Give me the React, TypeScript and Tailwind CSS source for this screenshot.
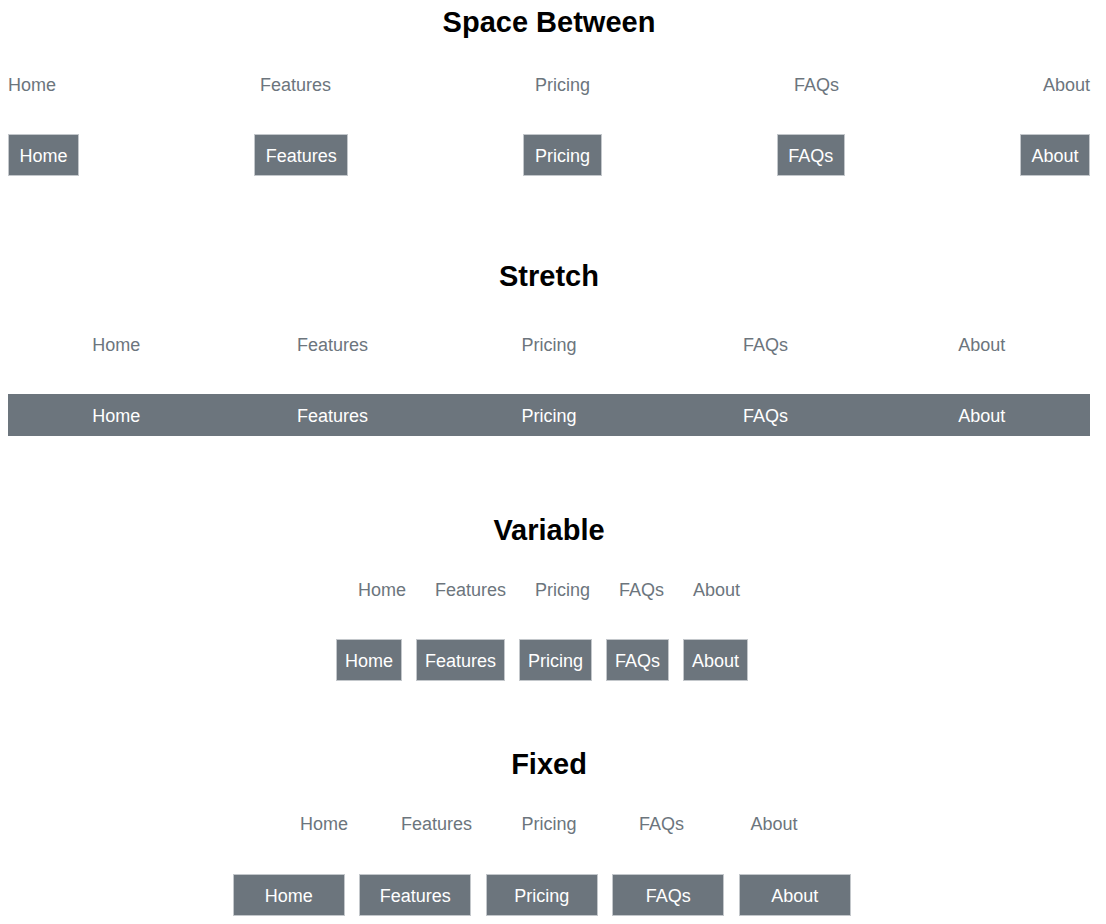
import React from "react";

const items = ["Home", "Features", "Pricing", "FAQs", "About"];

const btn =
  "bg-[#6c757d] text-white border border-[#c3c7cb] pt-[11px] pb-[9px] leading-[20px] text-[18px]";

export default function App() {
  return (
    <div className="pl-2 pr-4 font-['Liberation_Sans',Arial,sans-serif] bg-white min-h-[924px]">
      {/* Space Between */}
      <h2 className="mt-[5px] text-center text-[29px] leading-[34px] font-bold text-black">
        Space Between
      </h2>
      <div className="mt-[36px] flex justify-between text-[18px] leading-[21px] text-[#6c757d]">
        {items.map((t) => (
          <span key={t}>{t}</span>
        ))}
      </div>
      <div className="mt-[38px] flex justify-between">
        {items.map((t) => (
          <span key={t} className={`${btn} px-[10.5px]`}>
            {t}
          </span>
        ))}
      </div>

      {/* Stretch */}
      <h2 className="mt-[83px] text-center text-[29px] leading-[34px] font-bold text-black">
        Stretch
      </h2>
      <div className="mt-[41.5px] flex text-[18px] leading-[21px] text-[#6c757d]">
        {items.map((t) => (
          <span key={t} className="flex-1 text-center">
            {t}
          </span>
        ))}
      </div>
      <div className="mt-[38.5px] flex">
        {items.map((t) => (
          <span key={t} className="flex-1 text-center bg-[#6c757d] text-white pt-[11px] pb-[9px] leading-[22px] text-[18px]">
            {t}
          </span>
        ))}
      </div>

      {/* Variable */}
      <h2 className="mt-[77px] text-center text-[29px] leading-[34px] font-bold text-black">
        Variable
      </h2>
      <div className="mt-[32.5px] flex justify-center text-[18px] leading-[21px] text-[#6c757d]">
        {items.map((t) => (
          <span key={t} className="px-[14.5px]">
            {t}
          </span>
        ))}
      </div>
      <div className="mt-[38.5px] flex justify-center">
        {items.map((t) => (
          <span key={t} className={`${btn} px-[8px] mr-[14px]`}>
            {t}
          </span>
        ))}
      </div>

      {/* Fixed */}
      <h2 className="mt-[66px] text-center text-[29px] leading-[34px] font-bold text-black">
        Fixed
      </h2>
      <div className="mt-[32.5px] flex justify-center text-[18px] leading-[21px] text-[#6c757d]">
        {items.map((t) => (
          <span key={t} className="w-[112.5px] text-center">
            {t}
          </span>
        ))}
      </div>
      <div className="mt-[39.5px] flex justify-center">
        {items.map((t) => (
          <span key={t} className={`${btn} w-[112px] text-center mr-[14.5px]`}>
            {t}
          </span>
        ))}
      </div>
    </div>
  );
}
